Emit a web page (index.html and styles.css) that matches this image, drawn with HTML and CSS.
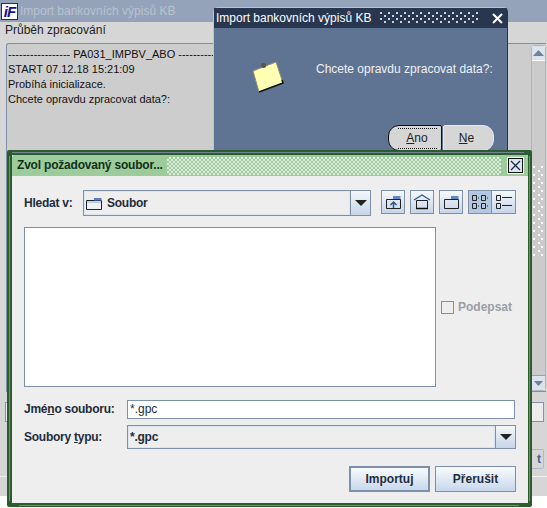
FILE: index.html
```html
<!DOCTYPE html>
<html lang="cs">
<head>
<meta charset="utf-8">
<title>Import bankovních výpisů KB</title>
<link rel="stylesheet" href="styles.css">
</head>
<body>
<div class="desktop">
  <div class="main">
    <div class="main-title">
      <div class="logo"><span>iF</span></div>
      <span class="main-title-text">Import bankovních výpisů KB</span>
    </div>
    <div class="main-body">
      <div class="section">Průběh zpracování</div>
      <div class="log-row">
        <div class="log">
          <div>----------------- PA031_IMPBV_ABO ------------------</div>
          <div>START 07.12.18 15:21:09</div>
          <div>Probíhá inicializace.</div>
          <div>Chcete opravdu zpracovat data?:</div>
        </div>
        <div class="scroll">
          <div class="scroll-btn"><svg width="11" height="6"><path d="M5.500 0 11 6H0z" fill="#6f819c"/></svg></div>
          <div class="scroll-track"><div class="scroll-thumb"></div></div>
          <div class="scroll-btn"><svg width="9" height="5"><path d="M0 0h9L4.500 5z" fill="#6f819c"/></svg></div>
        </div>
      </div>
      <div class="back-field"></div>
      <div class="back-btn">t</div>
      <div class="back-rule"></div>
    </div>
  </div>

  <div class="modal">
    <div class="modal-title">
      <span class="modal-title-text">Import bankovních výpisů KB</span>
      <div class="modal-dots"></div>
      <svg class="modal-x" width="11" height="11"><path d="M1 1l9 9M10 1l-9 9" stroke="#fff" stroke-width="2"/></svg>
    </div>
    <div class="modal-body">
      <svg class="note" width="34" height="34" viewBox="0 0 34 34">
        <path d="M3 11 26 2l7 21-24 9z" fill="#ffffb4" stroke="#8f8f78"/>
        <path d="M9 32l24-9-1-3" fill="none" stroke="#111" stroke-width="1.500"/>
        <circle cx="13.500" cy="5.500" r="2.500" fill="#555"/>
      </svg>
      <div class="modal-msg">Chcete opravdu zpracovat data?:</div>
      <div class="modal-btns">
        <div class="pill pill-active"><span class="pill-focus"><u>A</u>no</span></div>
        <div class="pill pill-ne"><span><u>N</u>e</span></div>
      </div>
    </div>
  </div>

  <div class="dialog">
    <div class="dialog-inner">
      <div class="dialog-title">
        <span class="dialog-title-text">Zvol požadovaný soubor...</span>
        <div class="dialog-dots"></div>
        <div class="dialog-x"><svg width="11" height="11"><path d="M1 1l9 9M10 1l-9 9" stroke="#1a2a44" stroke-width="1.300"/></svg></div>
      </div>
      <div class="dialog-body">
        <div class="row-top">
          <label class="lbl lbl-look">Hledat v:</label>
          <div class="combo combo-look">
            <div class="combo-value">
              <svg class="folder" width="16" height="13" viewBox="0 0 16 13">
                <path d="M.5 3.500h15v9H.5z" fill="#eef2f8" stroke="#223"/>
                <path d="M8 1h7.500v2.500H8z" fill="#5b7fb8"/>
                <path d="M1 4h14v2H1z" fill="#c3d0e2"/>
              </svg>
              <span>Soubor</span>
            </div>
            <div class="combo-arrow"><i class="tri"></i></div>
          </div>
          <div class="tools">
            <div class="tool"><svg width="17" height="15" viewBox="0 0 17 15"><path d="M1.500 4.500h14v9h-14z" fill="none" stroke="#222"/><path d="M8 1h7.500v3H8z" fill="#6487bd"/><path d="M8.500 13V8M5.500 10l3-3 3 3" fill="none" stroke="#31588f" stroke-width="1.500"/></svg></div>
            <div class="tool"><svg width="18" height="16" viewBox="0 0 18 16"><path d="M3.500 6.500h11v8h-11z" fill="none" stroke="#222"/><path d="M1 6 9 1l8 5" fill="none" stroke="#31588f" stroke-width="1.300"/><path d="M3 14.500h12" stroke="#111" stroke-width="1.500"/></svg></div>
            <div class="tool"><svg width="17" height="15" viewBox="0 0 17 15"><path d="M1.500 4.500h14v9h-14z" fill="none" stroke="#222"/><path d="M8 1h7.500v3H8z" fill="#6487bd"/></svg></div>
            <div class="view-tools">
              <div class="tool tool-on"><svg width="18" height="16" viewBox="0 0 18 16"><path d="M1.500 1.500h4v5h-4zM10.500 1.500h4v5h-4zM1.500 9.500h4v5h-4zM10.500 9.500h4v5h-4z" fill="none" stroke="#222"/><path d="M7 4h1M16 4h1M7 12h1M16 12h1" stroke="#222"/></svg></div>
              <div class="tool tool-joined"><svg width="18" height="16" viewBox="0 0 18 16"><path d="M1.500 1.500h4v5h-4zM1.500 9.500h4v5h-4z" fill="none" stroke="#222"/><path d="M7 3.500h10M7 11.500h10" stroke="#222"/></svg></div>
            </div>
          </div>
        </div>
        <div class="row-mid">
          <div class="file-list"></div>
          <div class="sign">
            <i class="check"></i>
            <span>Podepsat</span>
          </div>
        </div>
        <div class="form-row form-name">
          <label class="lbl lbl-form">Jmé<u>n</u>o souboru:</label>
          <div class="input">*.gpc</div>
        </div>
        <div class="form-row form-type">
          <label class="lbl lbl-form">Soubory <u>t</u>ypu:</label>
          <div class="combo combo-type">
            <div class="combo-value combo-value-type">*.gpc</div>
            <div class="combo-arrow"><i class="tri"></i></div>
          </div>
        </div>
        <div class="actions">
          <div class="btn btn-default">Importuj</div>
          <div class="btn">Přerušit</div>
        </div>
      </div>
    </div>
    <div class="dialog-line-top"></div>
    <div class="dialog-line-left"></div>
    <div class="dialog-line-right"></div>
    <div class="dialog-line-bottom"></div>
  </div>
</div>
</body>
</html>
```
FILE: styles.css
```css
* { box-sizing: border-box; }
html, body { margin: 0; padding: 0; background: #fff; }
body { font: 12px/15px "Liberation Sans", Arial, sans-serif; color: #111; }
u { text-decoration: underline; }

.desktop { position: relative; width: 547px; height: 508px; overflow: hidden; background: #fff; }

/* background window */
.main { display: flex; flex-direction: column; height: 496px; }
.main-title { height: 22px; display: flex; align-items: center; padding-left: 1px; background: #94a3b9; }
.logo { width: 17px; height: 17px; background: #fff; border: 1px solid #1a1ad0; display: flex; align-items: center; justify-content: center; }
.logo span { font: italic bold 15px/15px "Liberation Sans", sans-serif; color: #10108c; letter-spacing: -1px; }
.main-title-text { margin-left: 2px; color: #b7c2d1; }
.main-body { flex: 1; background: #d6d6d6; display: flex; flex-direction: column; }
.section { padding: 1px 0 0 5px; height: 21px; color: #222; }
.log-row { display: flex; height: 349px; margin-left: 6px; margin-right: 1px; background: #cdcdcd; border: 1px solid #7e90a8; border-right: 0; border-radius: 3px 0 0 0; }
.log { flex: 1; padding: 3px 0 0 1px; font-size: 11px; color: #111; white-space: nowrap; overflow: hidden; }
.scroll { width: 15px; display: flex; flex-direction: column; margin-top: 1px; border: 1px solid #aab5c6; border-radius: 4px; background: #cbcbcb; }
.scroll-btn { height: 14px; display: flex; align-items: center; justify-content: center; background: #dde3ec; }
.scroll-track { flex: 1; padding-top: 105px; border-top: 1px solid #fff; border-bottom: 1px solid #8ea0bb; }
.scroll-thumb { height: 90px; background-image: conic-gradient(from 270deg at 2px 2px, #fff 25%, transparent 0), conic-gradient(from 270deg at 2px 2px, #fff 25%, transparent 0); background-size: 8px 8px; background-position: 1px 0, 6px 4px; }
.back-field { margin: 10px 3px 0 5px; height: 20px; background: #ececec; border: 1px solid #8293ab; }
.back-btn { margin: 27px 3px 0 auto; width: 40px; height: 20px; border: 1px solid #aeb8c7; border-radius: 2px; text-align: right; padding-right: 2px; color: #44628f; font-weight: bold; line-height: 18px; }
.back-rule { margin-top: 7px; height: 1px; background: #f2f2f2; }

/* confirm dialog */
.modal { position: absolute; left: 213px; top: 7px; width: 295px; height: 147px; background: #5f7393; border: 1px solid #26344d; border-top-color: #b9c3d2; border-left-color: #b9c3d2; border-radius: 5px 5px 0 0; display: flex; flex-direction: column; }
.modal-title { height: 20px; background: #28364f; display: flex; align-items: center; padding-left: 2px; flex: none; }
.modal-title-text { color: #fff; white-space: nowrap; }
.modal-dots { width: 100px; height: 12px; margin-left: 9px; background-image: conic-gradient(from 270deg at 2px 2px, #cdd3dc 25%, transparent 0), conic-gradient(from 270deg at 2px 2px, #cdd3dc 25%, transparent 0); background-size: 8px 6px; background-position: 0 0, 4px 3px; }
.modal-x { margin-left: 12px; }
.modal-body { position: relative; flex: 1; }
.note { position: absolute; left: 36px; top: 32px; }
.modal-msg { position: absolute; left: 102px; top: 34px; color: #eef1f5; white-space: nowrap; }
.modal-btns { position: absolute; left: 174px; top: 97px; display: flex; gap: 1px; }
.pill { width: 54px; height: 26px; background: #d6d6d6; border: 1px solid #111; border-radius: 11px; display: flex; align-items: center; justify-content: center; color: #222; }
.pill-active { border: 1px solid #111; border-radius: 11px 2px 2px 11px; padding-left: 4px; }
.pill-focus { display: block; width: 39px; text-align: center; border-top: 1px dotted #111; border-bottom: 1px dotted #111; height: 21px; line-height: 19px; }
.pill-ne { width: 51px; border: 1px solid #e5e8ed; border-radius: 2px 11px 11px 2px; padding-right: 4px; }

/* file dialog */
.dialog { position: absolute; left: 7px; top: 150px; width: 525px; height: 357px; background: #2c5c2e; padding: 5px 4px 4px 5px; border-radius: 2px; }
.dialog-inner { height: 100%; display: flex; flex-direction: column; background: #eeeeee; }
.dialog-title { height: 21px; flex: none; background: #9ecb9c; border-radius: 2px 2px 0 0; display: flex; align-items: center; padding-left: 5px; }
.dialog-title-text { width: 150px; flex: none; font-weight: bold; letter-spacing: -0.2px; color: #0f3316; white-space: nowrap; }
.dialog-dots { width: 334px; height: 18px; background-image: conic-gradient(#dcecdf 25%, transparent 0 50%, #dcecdf 0 75%, transparent 0); background-size: 4px 4px; }
.dialog-x { width: 15px; height: 15px; margin-left: 7px; background: #dfe6f1; border: 1px solid #111; outline: 1px solid #f4f7fb; display: flex; align-items: center; justify-content: center; }
.dialog-line-top { position: absolute; left: 5px; top: 2px; right: 8px; height: 1px; background: #74879a; }
.dialog-line-left { position: absolute; left: 2px; top: 6px; bottom: 6px; width: 1px; background: #74879a; }
.dialog-line-right { position: absolute; right: 2px; top: 6px; bottom: 6px; width: 1px; background: #74879a; }
.dialog-line-bottom { position: absolute; left: 12px; right: 13px; bottom: 1px; height: 1px; background: #74879a; }

.dialog-body { flex: 1; padding: 14px 12px 0 12px; display: flex; flex-direction: column; }
.lbl { font-weight: bold; letter-spacing: -0.25px; color: #232c3c; white-space: nowrap; }
.row-top { display: flex; align-items: flex-start; height: 37px; }
.lbl-look { width: 59px; line-height: 26px; }
.combo { display: flex; border: 1px solid #7e90a8; background: #e6ebf3; }
.combo-look { width: 288px; height: 26px; }
.combo-value { flex: 1; display: flex; align-items: center; gap: 5px; padding-left: 1px; font-weight: bold; letter-spacing: -0.25px; color: #232c3c; border: 1px solid #dce6f2; background: #eeeeee; }
.folder { flex: none; }
.combo-arrow { width: 20px; flex: none; display: flex; align-items: center; justify-content: center; border-left: 1px solid #7e90a8; background: linear-gradient(#f4f7fb, #c6d5e8); }
.tri { display: block; width: 0; height: 0; border: 6px solid transparent; border-top: 6px solid #222; border-bottom: 0; }
.tools { display: flex; margin-left: 10px; gap: 5px; }
.tool { width: 24px; height: 24px; border: 1px solid #7e90a8; background: linear-gradient(#f5f8fc, #c6d5e8); display: flex; align-items: center; justify-content: center; }
.view-tools { display: flex; }
.tool-on { background: #b3c8e0; }
.tool-joined { margin-left: -1px; width: 25px; }
.row-mid { display: flex; align-items: flex-start; height: 173px; }
.file-list { width: 412px; height: 160px; background: #fff; border: 1px solid #7e90a8; }
.sign { display: flex; align-items: center; margin-left: 5px; margin-top: 73px; font-weight: bold; color: #9a9ea6; gap: 4px; }
.check { display: block; width: 13px; height: 13px; border: 1px solid #7e90a8; background: #eeeeee; }
.form-row { display: flex; }
.lbl-form { width: 103px; }
.form-name { height: 25px; align-items: flex-start; }
.form-name .lbl-form { margin-top: 2px; }
.input { width: 388px; height: 19px; background: #fff; border: 1px solid #7e90a8; padding: 1px 0 0 2px; color: #232c3c; }
.form-type { align-items: center; height: 24px; }
.combo-type { width: 389px; height: 24px; }
.actions { display: flex; justify-content: flex-end; gap: 5px; margin-top: 17px; }
.btn { width: 81px; height: 26px; border: 1px solid #7e90a8; background: linear-gradient(#f4f7fb 10%, #c6d8ec); display: flex; align-items: center; justify-content: center; font-weight: bold; color: #232c3c; }
.btn-default { border-width: 2px; }
```
